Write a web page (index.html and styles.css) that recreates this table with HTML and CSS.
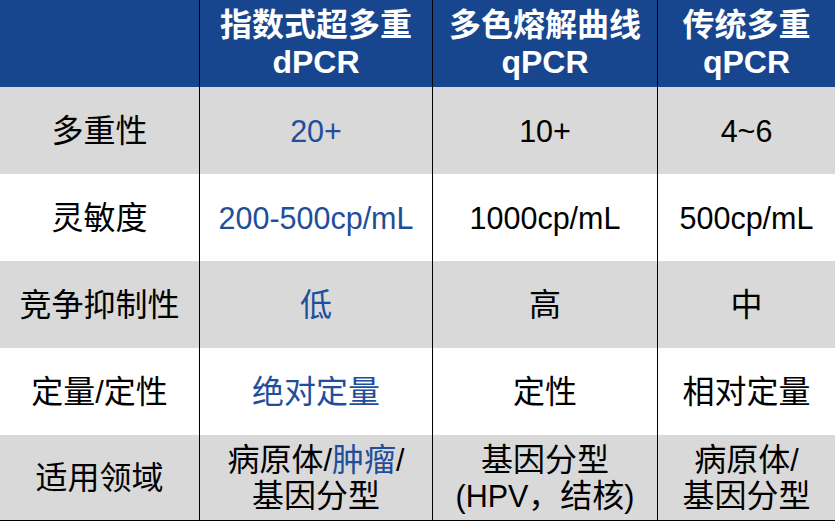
FILE: index.html
```html
<!DOCTYPE html>
<html lang="zh-CN">
<head>
<meta charset="utf-8">
<title>多重PCR对比</title>
<link rel="stylesheet" href="styles.css">
</head>
<body>
<div class="table">
  <div class="row head">
    <div class="cell"></div>
    <div class="cell"><div>指数式超多重<br>dPCR</div></div>
    <div class="cell"><div>多色熔解曲线<br>qPCR</div></div>
    <div class="cell"><div>传统多重<br>qPCR</div></div>
  </div>
  <div class="row gray">
    <div class="cell"><div>多重性</div></div>
    <div class="cell hl"><div class="en">20+</div></div>
    <div class="cell"><div class="en">10+</div></div>
    <div class="cell"><div class="en">4~6</div></div>
  </div>
  <div class="row white">
    <div class="cell"><div>灵敏度</div></div>
    <div class="cell hl"><div class="en">200-500cp/mL</div></div>
    <div class="cell"><div class="en">1000cp/mL</div></div>
    <div class="cell"><div class="en">500cp/mL</div></div>
  </div>
  <div class="row gray">
    <div class="cell"><div>竞争抑制性</div></div>
    <div class="cell hl"><div>低</div></div>
    <div class="cell"><div>高</div></div>
    <div class="cell"><div>中</div></div>
  </div>
  <div class="row white">
    <div class="cell"><div>定量<span class="en">/</span>定性</div></div>
    <div class="cell hl"><div>绝对定量</div></div>
    <div class="cell"><div>定性</div></div>
    <div class="cell"><div>相对定量</div></div>
  </div>
  <div class="row gray last">
    <div class="cell"><div>适用领域</div></div>
    <div class="cell"><div>病原体<span class="en">/</span><span class="hl">肿瘤</span><span class="en">/</span><br>基因分型</div></div>
    <div class="cell"><div>基因分型<br><span class="en">(HPV</span>，结核<span class="en">)</span></div></div>
    <div class="cell"><div>病原体<span class="en">/</span><br>基因分型</div></div>
  </div>
</div>
</body>
</html>
```
FILE: styles.css
```css
html, body {
  margin: 0;
  padding: 0;
  background: #ffffff;
}
body {
  width: 835px;
  height: 523px;
  overflow: hidden;
  font-family: "Liberation Sans", "Noto Sans CJK SC", sans-serif;
  color: #000;
}
.table {
  display: flex;
  flex-direction: column;
  width: 835px;
}
.row {
  display: grid;
  grid-template-columns: 200px 233px 225px 177px;
  height: 87px;
}
.row.last {
  height: 85px;
  border-bottom: 1px solid #000;
}
.cell {
  display: flex;
  align-items: center;
  justify-content: center;
  text-align: center;
  font-size: 32px;
  line-height: 36px;
}
.cell:not(:last-child) {
  border-right: 1px solid #000;
}
.en {
  font-size: 30.5px;
}
.head {
  background: #18468e;
  color: #fff;
}
.head .cell {
  font-weight: bold;
  font-size: 32px;
  line-height: 37px;
}
.gray { background: #d9d9d9; }
.white { background: #ffffff; }
.hl { color: #1f4e9b; }
```
